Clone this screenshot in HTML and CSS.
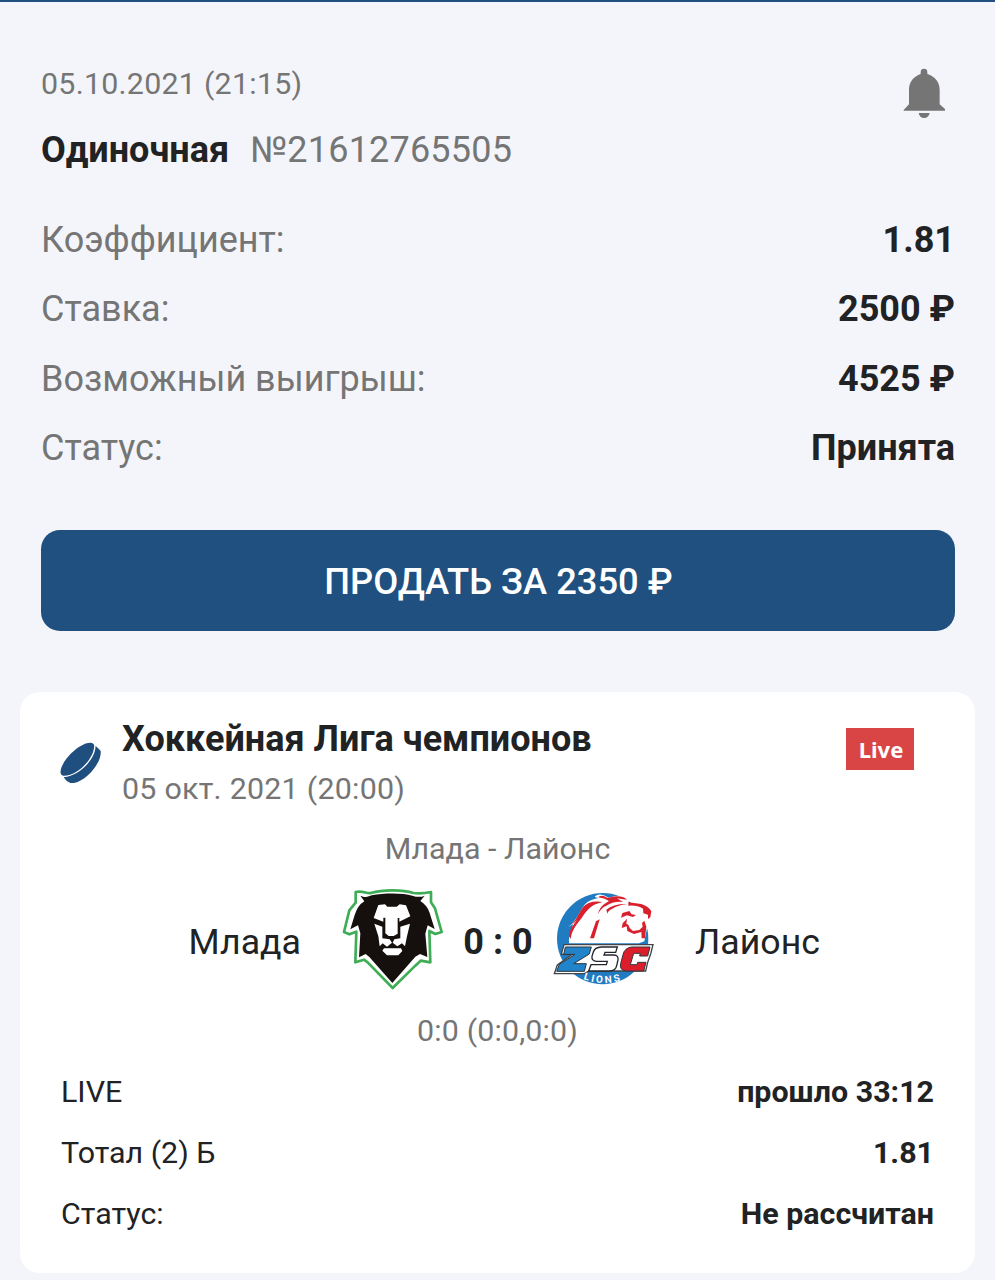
FILE: index.html
```
<!DOCTYPE html>
<html lang="ru">
<head>
    <meta charset="UTF-8">
    <meta name="viewport" content="width=device-width, initial-scale=1.0">
    <title>Одиночная №21612765505</title>
    <link rel="stylesheet" href="styles.css">
</head>
<body>
    <div class="bet">
        <div class="bet-header">
            <div>
                <div class="bet-date">05.10.2021 (21:15)</div>
                <div class="bet-title"><b>Одиночная</b><span class="bet-number">№21612765505</span></div>
            </div>
            <svg class="bell" viewBox="0 0 210 225">
                <path d="M41 165L57 148V105C57 80 71 65 92 57V51Q92 41 102 41Q112 41 112 51V57C135 65 149 81 149 105V148L165 162V167H41ZM86 174H119Q116 189 102 189Q89 189 86 174Z" fill="#757575"/>
            </svg>
        </div>

        <div class="bet-info">
            <div class="row"><span>Коэффициент:</span><b>1.81</b></div>
            <div class="row"><span>Ставка:</span><b>2500 ₽</b></div>
            <div class="row"><span>Возможный выигрыш:</span><b>4525 ₽</b></div>
            <div class="row"><span>Статус:</span><b>Принята</b></div>
        </div>

        <button class="sell">ПРОДАТЬ ЗА 2350 ₽</button>
    </div>

    <div class="card">
        <div class="card-header">
            <svg class="puck" viewBox="0 0 126 126">
                <path d="M2 97C-4 62 66-5 98 3Q103 4 105 9C107 49 53 106 10 104Q4 103 2 97Z" fill="#1f4f7e"/>
                <path d="M109 12Q120 19 125 28C129 68 69 132 32 126Q18 120 11 108C58 106 111 51 109 12Z" fill="#1f4f7e"/>
            </svg>
            <div class="league">
                <div class="league-name">Хоккейная Лига чемпионов</div>
                <div class="league-date">05 окт. 2021 (20:00)</div>
            </div>
            <span class="live">Live</span>
        </div>

        <div class="match">Млада - Лайонс</div>

        <div class="score-line">
            <span class="team home">Млада</span>
            <svg class="logo" viewBox="0 0 345 345">
                <path d="M62 36C84 31 95 42 108 39C145 28 204 29 235 39Q260 42 288 36V67L300 85L320 156L301 162L283 153L286 247L257 242L241 257L173 324L98 247L87 239L61 247L64 155L43 163L27 156L43 91L62 68Z" fill="#fff" stroke="#3fac56" stroke-width="8" stroke-linejoin="round"/>
                <path d="M76 47C91 54 101 50 110 46C148 39 204 39 232 47Q253 54 269 47L256 63Q278 77 284 99L299 147L278 136L271 161L277 231L255 222L241 230L172 309L103 231L92 222L72 232L76 160L69 136L46 148L59 105Q68 76 88 64Z" fill="#15100e"/>
                <path d="M130 75L150 73L157 80H185L194 73L213 76L226 109L193 125V114H188V161L176 168H161L151 160V113H145V125L116 114Z" fill="#fff"/>
                <path d="M118 131L142 140V175L164 178L171 188L156 200L143 190L134 199L130 169ZM225 131L196 140V175L178 178L173 188L187 199L201 190L210 199L216 169ZM147 205H198L202 213L190 226H156L142 212Z" fill="#fff"/>
            </svg>
            <b class="score">0 : 0</b>
            <svg class="logo" viewBox="0 0 345 345">
                <circle cx="173" cy="176" r="137" fill="#207bc1"/>
                <!-- lion head -->
                <g transform="translate(24 24)">
                    <path d="M48 166C46 140 58 121 60 108L45 118C75 95 76 74 96 49Q110 34 137 30Q124 29 126 25Q140 12 166 29Q207 17 227 36L228 46L270 50Q291 59 296 72L291 98L284 112L274 160L258 166Z" fill="#fff"/>
                    <path d="M54 110C76 95 80 55 107 45Q126 38 149 42C112 50 101 68 86 90C68 112 56 129 53 153L48 145C48 127 60 113 72 95Q65 105 54 110Z" fill="#da202d"/>
                    <path d="M135 28Q145 18 164 30Q203 18 222 35Q204 33 192 31L210 42Q182 39 160 53Q144 59 134 80Q139 58 154 48L168 39Q155 30 135 28Z" fill="#da202d"/>
                    <path d="M160 65Q181 47 222 48Q195 52 178 62Q165 68 163 77ZM111 151L129 100L140 94L123 151Z" fill="#da202d"/>
                    <path d="M226 43L265 48Q289 57 295 70L292 88L285 93V80L271 76L270 62Q253 51 226 53ZM208 75L229 69L236 79L249 81L240 87L222 82L204 89Z" fill="#da202d"/>
                    <path d="M209 106L222 92L220 107Q228 109 230 120L240 129L259 126L269 116L267 105L274 98L280 116L276 151H266L265 132L243 138L223 129L221 115L206 120Z" fill="#da202d"/>
                </g>
                <!-- ZSC -->
                <path d="M57 194H324L317 222L308 247L302 273H132L118 281H28L37 255L83 222L49 223Z" fill="#fff" stroke="#42464b" stroke-width="4"/>
                <path d="M61 201H139L133 222L86 251H124L118 274H35L43 253L90 223H56Z" fill="#2184ca" stroke="#30363d" stroke-width="3"/>
                <path d="M217 201H169Q149 202 145 216L141 229Q139 243 155 244H187L184 254H138L131 273H193Q212 273 215 257L219 240Q221 226 207 225H177L180 217H212Z" fill="#fff" stroke="#22272d" stroke-width="4"/>
                <path d="M315 201H260Q239 203 234 224L227 251Q222 271 244 273H296L303 247H278L276 254H256L266 220H286L284 228H308Z" fill="#dc1e2b" stroke="#30363d" stroke-width="3"/>
                <path id="lions-arc" d="M115 297Q178 322 246 296" fill="none"/>
                <text class="lions"><textPath href="#lions-arc">LIONS</textPath></text>
            </svg>
            <span class="team away">Лайонс</span>
        </div>

        <div class="periods">0:0 (0:0,0:0)</div>

        <div class="details">
            <div class="row"><span>LIVE</span><b>прошло 33:12</b></div>
            <div class="row"><span>Тотал (2) Б</span><b>1.81</b></div>
            <div class="row"><span>Статус:</span><b>Не рассчитан</b></div>
        </div>
    </div>
</body>
</html>
```
FILE: styles.css
```
* {
    box-sizing: border-box;
}

body {
    margin: 0;
    height: 1280px;
    overflow: hidden;
    border-top: 2px solid #1f5080;
    background: #f4f5fa;
    color: #212224;
    font-family: Roboto, sans-serif;
    font-size: 30.4px;
}

.bet {
    padding: 60px 40px 0 41px;
}

.bet-header {
    display: flex;
    justify-content: space-between;
}

.bet-date {
    line-height: 44px;
    color: #757575;
    letter-spacing: 0.25px;
}

.bet-title {
    display: flex;
    gap: 21px;
    margin-top: 18px;
    font-size: 36px;
    line-height: 52px;
}

.bet-number {
    color: #757575;
    letter-spacing: 0.2px;
}

.bell {
    width: 70px;
    height: 75px;
    margin: -7px -5px 0 0;
}

.bet-info {
    margin-top: 30px;
    font-size: 36px;
    line-height: 69.25px;
}

.row {
    display: flex;
    justify-content: space-between;
}

.bet-info span {
    color: #757575;
}

.sell {
    display: block;
    width: 914px;
    height: 101px;
    margin: 47px 0 0;
    padding: 3px 0 0 1px;
    border: none;
    border-radius: 19px;
    background: #20507f;
    color: #fff;
    font: 500 36.3px/98px Roboto, sans-serif;
}

.card {
    height: 581px;
    margin: 61px 20px 0;
    border-radius: 20px;
    background: #fff;
}

.card-header {
    display: flex;
    align-items: flex-start;
    padding: 22px 61px 0 41px;
}

.puck {
    width: 41px;
    height: 41px;
    margin: 28px 0 0 -1px;
}

.league {
    flex: 1;
    margin-left: 21px;
}

.league-name {
    font-size: 36px;
    font-weight: bold;
    line-height: 50px;
}

.league-date {
    line-height: 49px;
    color: #757575;
    letter-spacing: 0.25px;
}

.live {
    width: 68px;
    margin-top: 14px;
    padding-left: 2px;
    background: #d94545;
    color: #fff;
    font: bold 22px/42px "Noto Sans", sans-serif;
    text-align: center;
}

.match {
    margin-top: 16px;
    line-height: 40px;
    text-align: center;
    color: #757575;
}

.score-line {
    display: grid;
    grid-template-columns: 1fr 115px 95px 115px 1fr;
    align-items: center;
    margin-top: 11px;
    font-size: 36px;
}

.logo {
    width: 115px;
    height: 115px;
}

.team,
.score {
    padding-top: 8px;
}

.home {
    padding-right: 34px;
    text-align: right;
    font-size: 35.7px;
}

.away {
    padding-left: 35px;
    font-size: 35.7px;
}

.score {
    padding-left: 1px;
    text-align: center;
}

.lions {
    fill: #fff;
    font: bold 30px Roboto, sans-serif;
    letter-spacing: 7px;
}

.periods {
    margin-top: 16px;
    line-height: 40px;
    text-align: center;
    color: #757575;
    letter-spacing: 0.15px;
}

.details {
    margin-top: 10px;
    padding: 0 41px;
    line-height: 61px;
}
```
